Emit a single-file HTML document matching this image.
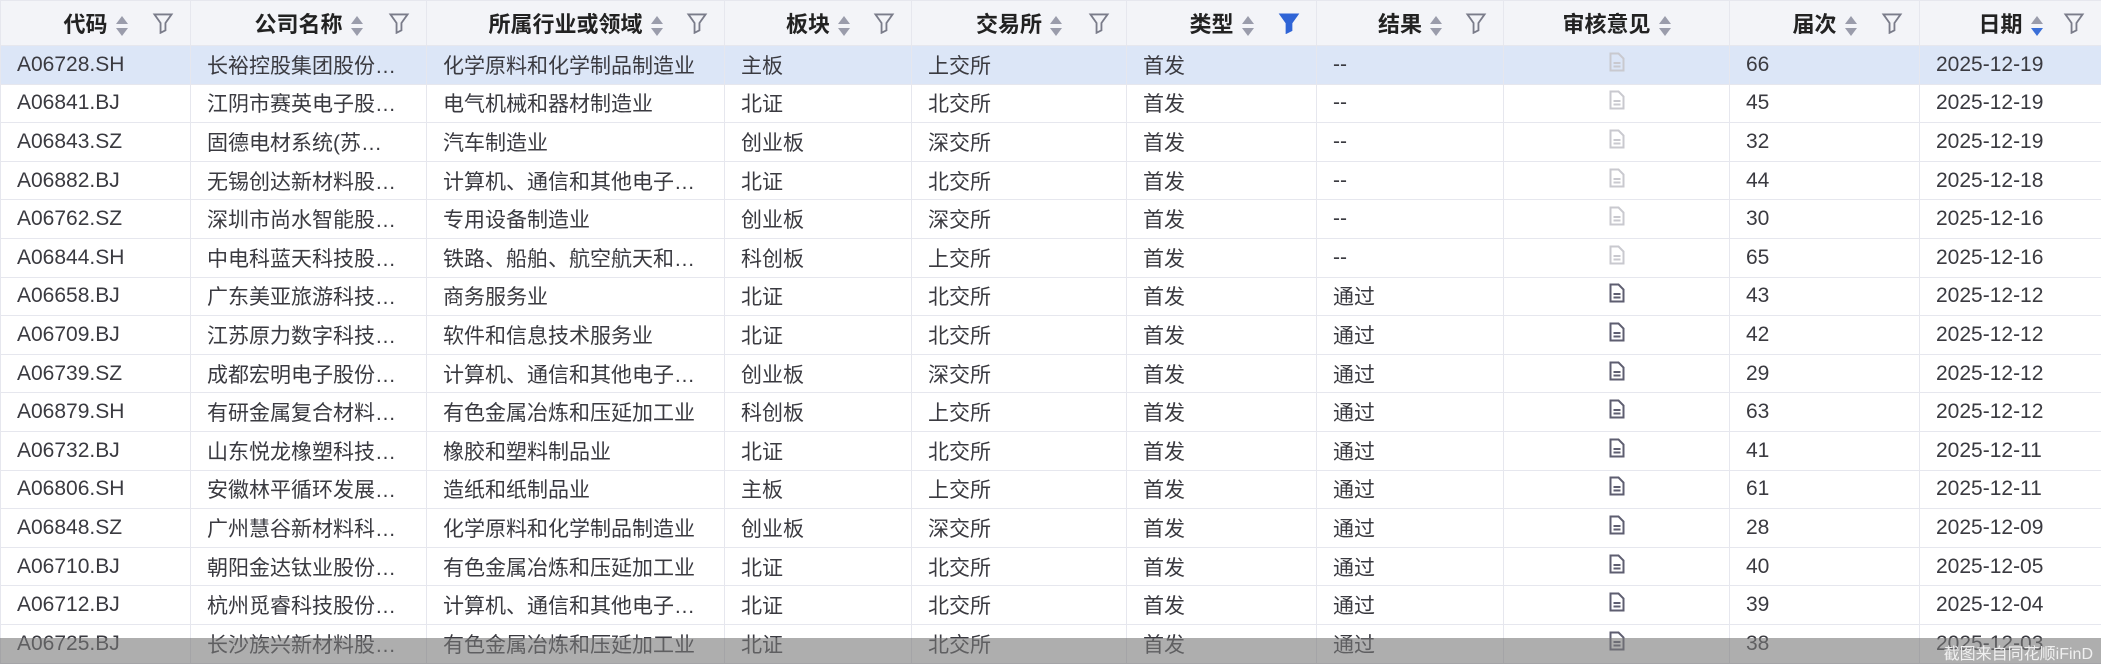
<!DOCTYPE html><html><head><meta charset="utf-8"><style>
body{margin:0;width:2101px;height:664px;overflow:hidden;background:#fff;font-family:"Liberation Sans","Noto Sans CJK SC",sans-serif;position:relative}
table{border-collapse:collapse;table-layout:fixed;width:2101px}
td,th{border:1px solid #e6e7ee;height:37.6px;padding:0 0 0 16px;font-size:21px;color:#3a3a40;white-space:nowrap;overflow:hidden;text-align:left}
th{height:44px;background:#f3f4f8;font-weight:bold;font-size:22px;color:#222;text-align:center;padding:0;position:relative}
tr.sel td{background:#dce6f7}
.s{display:inline-block;vertical-align:middle;margin-left:8px;width:12px;height:24px;position:relative}
.s:before{content:"";position:absolute;left:0;top:2px;border:6px solid transparent;border-bottom:8px solid #9a9cab;border-top:0}
.s:after{content:"";position:absolute;left:0;top:14px;border:6px solid transparent;border-top:8px solid #9a9cab;border-bottom:0}
.s.d:after{border-top-color:#3b6fd8}
.f{position:absolute;right:16px;top:11px}
td.ic{text-align:center;padding:0}
.bar{position:absolute;left:0;top:638px;width:2101px;height:26px;background:rgba(120,120,120,.6)}
.wm{position:absolute;right:8px;top:640px;color:#f0f0f0;font-size:16px}
</style></head><body>
<table><colgroup><col style="width:190px"><col style="width:236px"><col style="width:298px"><col style="width:187px"><col style="width:215px"><col style="width:190px"><col style="width:187px"><col style="width:226px"><col style="width:190px"><col style="width:182px"></colgroup>
<tr>
<th>代码<span class="s"></span><svg class="f" width="22" height="22" viewBox="0 0 18 18"><path d="M2 2h14l-5 7v6l-4 2V9z" fill="none" stroke="#7a7c8a" stroke-width="1.5"/></svg></th>
<th>公司名称<span class="s"></span><svg class="f" width="22" height="22" viewBox="0 0 18 18"><path d="M2 2h14l-5 7v6l-4 2V9z" fill="none" stroke="#7a7c8a" stroke-width="1.5"/></svg></th>
<th>所属行业或领域<span class="s"></span><svg class="f" width="22" height="22" viewBox="0 0 18 18"><path d="M2 2h14l-5 7v6l-4 2V9z" fill="none" stroke="#7a7c8a" stroke-width="1.5"/></svg></th>
<th>板块<span class="s"></span><svg class="f" width="22" height="22" viewBox="0 0 18 18"><path d="M2 2h14l-5 7v6l-4 2V9z" fill="none" stroke="#7a7c8a" stroke-width="1.5"/></svg></th>
<th>交易所<span class="s"></span><svg class="f" width="22" height="22" viewBox="0 0 18 18"><path d="M2 2h14l-5 7v6l-4 2V9z" fill="none" stroke="#7a7c8a" stroke-width="1.5"/></svg></th>
<th>类型<span class="s"></span><svg class="f" width="22" height="22" viewBox="0 0 18 18"><path d="M2 2h14l-5 7v6l-4 2V9z" fill="#2f64d6" stroke="#2f64d6" stroke-width="1.5"/></svg></th>
<th>结果<span class="s"></span><svg class="f" width="22" height="22" viewBox="0 0 18 18"><path d="M2 2h14l-5 7v6l-4 2V9z" fill="none" stroke="#7a7c8a" stroke-width="1.5"/></svg></th>
<th>审核意见<span class="s"></span></th>
<th>届次<span class="s"></span><svg class="f" width="22" height="22" viewBox="0 0 18 18"><path d="M2 2h14l-5 7v6l-4 2V9z" fill="none" stroke="#7a7c8a" stroke-width="1.5"/></svg></th>
<th>日期<span class="s d"></span><svg class="f" width="22" height="22" viewBox="0 0 18 18"><path d="M2 2h14l-5 7v6l-4 2V9z" fill="none" stroke="#7a7c8a" stroke-width="1.5"/></svg></th>
</tr>
<tr class="sel"><td>A06728.SH</td><td>长裕控股集团股份…</td><td>化学原料和化学制品制造业</td><td>主板</td><td>上交所</td><td>首发</td><td>--</td><td class="ic"><svg width="16" height="20" viewBox="0 0 16 20"><path d="M1.5 1.5h8l5 5v12h-13z M4.5 11h7 M4.5 14.5h7" fill="none" stroke="#c9c9cf" stroke-width="2"/></svg></td><td>66</td><td>2025-12-19</td></tr>
<tr><td>A06841.BJ</td><td>江阴市赛英电子股…</td><td>电气机械和器材制造业</td><td>北证</td><td>北交所</td><td>首发</td><td>--</td><td class="ic"><svg width="16" height="20" viewBox="0 0 16 20"><path d="M1.5 1.5h8l5 5v12h-13z M4.5 11h7 M4.5 14.5h7" fill="none" stroke="#c9c9cf" stroke-width="2"/></svg></td><td>45</td><td>2025-12-19</td></tr>
<tr><td>A06843.SZ</td><td>固德电材系统(苏…</td><td>汽车制造业</td><td>创业板</td><td>深交所</td><td>首发</td><td>--</td><td class="ic"><svg width="16" height="20" viewBox="0 0 16 20"><path d="M1.5 1.5h8l5 5v12h-13z M4.5 11h7 M4.5 14.5h7" fill="none" stroke="#c9c9cf" stroke-width="2"/></svg></td><td>32</td><td>2025-12-19</td></tr>
<tr><td>A06882.BJ</td><td>无锡创达新材料股…</td><td>计算机、通信和其他电子…</td><td>北证</td><td>北交所</td><td>首发</td><td>--</td><td class="ic"><svg width="16" height="20" viewBox="0 0 16 20"><path d="M1.5 1.5h8l5 5v12h-13z M4.5 11h7 M4.5 14.5h7" fill="none" stroke="#c9c9cf" stroke-width="2"/></svg></td><td>44</td><td>2025-12-18</td></tr>
<tr><td>A06762.SZ</td><td>深圳市尚水智能股…</td><td>专用设备制造业</td><td>创业板</td><td>深交所</td><td>首发</td><td>--</td><td class="ic"><svg width="16" height="20" viewBox="0 0 16 20"><path d="M1.5 1.5h8l5 5v12h-13z M4.5 11h7 M4.5 14.5h7" fill="none" stroke="#c9c9cf" stroke-width="2"/></svg></td><td>30</td><td>2025-12-16</td></tr>
<tr><td>A06844.SH</td><td>中电科蓝天科技股…</td><td>铁路、船舶、航空航天和…</td><td>科创板</td><td>上交所</td><td>首发</td><td>--</td><td class="ic"><svg width="16" height="20" viewBox="0 0 16 20"><path d="M1.5 1.5h8l5 5v12h-13z M4.5 11h7 M4.5 14.5h7" fill="none" stroke="#c9c9cf" stroke-width="2"/></svg></td><td>65</td><td>2025-12-16</td></tr>
<tr><td>A06658.BJ</td><td>广东美亚旅游科技…</td><td>商务服务业</td><td>北证</td><td>北交所</td><td>首发</td><td>通过</td><td class="ic"><svg width="16" height="20" viewBox="0 0 16 20"><path d="M1.5 1.5h8l5 5v12h-13z M4.5 11h7 M4.5 14.5h7" fill="none" stroke="#5e5e70" stroke-width="2"/></svg></td><td>43</td><td>2025-12-12</td></tr>
<tr><td>A06709.BJ</td><td>江苏原力数字科技…</td><td>软件和信息技术服务业</td><td>北证</td><td>北交所</td><td>首发</td><td>通过</td><td class="ic"><svg width="16" height="20" viewBox="0 0 16 20"><path d="M1.5 1.5h8l5 5v12h-13z M4.5 11h7 M4.5 14.5h7" fill="none" stroke="#5e5e70" stroke-width="2"/></svg></td><td>42</td><td>2025-12-12</td></tr>
<tr><td>A06739.SZ</td><td>成都宏明电子股份…</td><td>计算机、通信和其他电子…</td><td>创业板</td><td>深交所</td><td>首发</td><td>通过</td><td class="ic"><svg width="16" height="20" viewBox="0 0 16 20"><path d="M1.5 1.5h8l5 5v12h-13z M4.5 11h7 M4.5 14.5h7" fill="none" stroke="#5e5e70" stroke-width="2"/></svg></td><td>29</td><td>2025-12-12</td></tr>
<tr><td>A06879.SH</td><td>有研金属复合材料…</td><td>有色金属冶炼和压延加工业</td><td>科创板</td><td>上交所</td><td>首发</td><td>通过</td><td class="ic"><svg width="16" height="20" viewBox="0 0 16 20"><path d="M1.5 1.5h8l5 5v12h-13z M4.5 11h7 M4.5 14.5h7" fill="none" stroke="#5e5e70" stroke-width="2"/></svg></td><td>63</td><td>2025-12-12</td></tr>
<tr><td>A06732.BJ</td><td>山东悦龙橡塑科技…</td><td>橡胶和塑料制品业</td><td>北证</td><td>北交所</td><td>首发</td><td>通过</td><td class="ic"><svg width="16" height="20" viewBox="0 0 16 20"><path d="M1.5 1.5h8l5 5v12h-13z M4.5 11h7 M4.5 14.5h7" fill="none" stroke="#5e5e70" stroke-width="2"/></svg></td><td>41</td><td>2025-12-11</td></tr>
<tr><td>A06806.SH</td><td>安徽林平循环发展…</td><td>造纸和纸制品业</td><td>主板</td><td>上交所</td><td>首发</td><td>通过</td><td class="ic"><svg width="16" height="20" viewBox="0 0 16 20"><path d="M1.5 1.5h8l5 5v12h-13z M4.5 11h7 M4.5 14.5h7" fill="none" stroke="#5e5e70" stroke-width="2"/></svg></td><td>61</td><td>2025-12-11</td></tr>
<tr><td>A06848.SZ</td><td>广州慧谷新材料科…</td><td>化学原料和化学制品制造业</td><td>创业板</td><td>深交所</td><td>首发</td><td>通过</td><td class="ic"><svg width="16" height="20" viewBox="0 0 16 20"><path d="M1.5 1.5h8l5 5v12h-13z M4.5 11h7 M4.5 14.5h7" fill="none" stroke="#5e5e70" stroke-width="2"/></svg></td><td>28</td><td>2025-12-09</td></tr>
<tr><td>A06710.BJ</td><td>朝阳金达钛业股份…</td><td>有色金属冶炼和压延加工业</td><td>北证</td><td>北交所</td><td>首发</td><td>通过</td><td class="ic"><svg width="16" height="20" viewBox="0 0 16 20"><path d="M1.5 1.5h8l5 5v12h-13z M4.5 11h7 M4.5 14.5h7" fill="none" stroke="#5e5e70" stroke-width="2"/></svg></td><td>40</td><td>2025-12-05</td></tr>
<tr><td>A06712.BJ</td><td>杭州觅睿科技股份…</td><td>计算机、通信和其他电子…</td><td>北证</td><td>北交所</td><td>首发</td><td>通过</td><td class="ic"><svg width="16" height="20" viewBox="0 0 16 20"><path d="M1.5 1.5h8l5 5v12h-13z M4.5 11h7 M4.5 14.5h7" fill="none" stroke="#5e5e70" stroke-width="2"/></svg></td><td>39</td><td>2025-12-04</td></tr>
<tr><td>A06725.BJ</td><td>长沙族兴新材料股…</td><td>有色金属冶炼和压延加工业</td><td>北证</td><td>北交所</td><td>首发</td><td>通过</td><td class="ic"><svg width="16" height="20" viewBox="0 0 16 20"><path d="M1.5 1.5h8l5 5v12h-13z M4.5 11h7 M4.5 14.5h7" fill="none" stroke="#5e5e70" stroke-width="2"/></svg></td><td>38</td><td>2025-12-03</td></tr>
</table>
<div class="bar"></div><div class="wm">截图来自同花顺iFinD</div>
</body></html>
